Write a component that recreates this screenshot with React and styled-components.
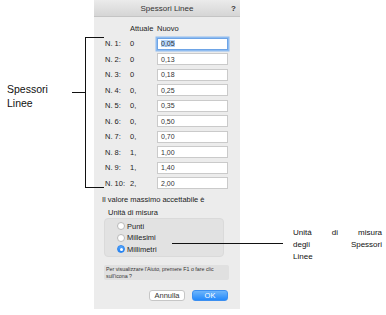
import React from 'react';
import styled, { createGlobalStyle } from 'styled-components';

const Global = createGlobalStyle`
  html, body { margin: 0; padding: 0; background: #fff; }
  body { font-family: "Liberation Sans", Arial, Helvetica, sans-serif; color: #1c1c1c; }
`;

const Page = styled.div`
  position: relative;
  width: 386px;
  height: 315px;
  display: flex;
  overflow: hidden;
`;

const LeftNote = styled.div`
  width: 94px;
  flex: none;
  box-sizing: border-box;
  padding: 82px 0 0 7px;
  font-size: 10.5px;
  line-height: 14px;
  color: #111;
`;

const Bracket = styled.div`
  position: absolute;
  left: 85px;
  top: 37px;
  width: 18px;
  height: 149px;
  border: 1.5px solid #111;
  border-right: none;
`;

const Leader = styled.div`
  position: absolute;
  left: ${p => p.$left}px;
  top: ${p => p.$top}px;
  width: ${p => p.$width}px;
  border-top: 1.5px solid #111;
`;

const Dialog = styled.div`
  width: 146px;
  height: 309px;
  flex: none;
  background: #ececec;
  display: flex;
  flex-direction: column;
  font-size: 7.5px;
`;

const TitleBar = styled.div`
  height: 17px;
  flex: none;
  box-sizing: border-box;
  display: grid;
  grid-template-columns: 1fr auto 1fr;
  align-items: center;
  padding: 0 4px;
  background: linear-gradient(#ebebeb, #d5d5d5);
  border-bottom: 1px solid #c4c4c4;
  font-size: 8px;
  color: #333;
`;

const Title = styled.div`
  grid-column: 2;
  text-align: center;
`;

const Help = styled.div`
  grid-column: 3;
  justify-self: end;
  font-weight: bold;
  font-size: 8px;
`;

const Table = styled.div`
  display: grid;
  grid-template-columns: 25px 27px 71px;
  grid-auto-rows: 12px;
  row-gap: 3.5px;
  align-items: center;
  margin: 5px 0 0 11px;
`;

const HeadCell = styled.div`
  grid-column: ${p => p.$col};
`;

const Cell = styled.div`
  white-space: nowrap;
`;

const Input = styled.div`
  height: 12px;
  box-sizing: border-box;
  background: #fff;
  border: 1px solid ${p => (p.$focused ? '#6ea4e6' : '#cacaca')};
  box-shadow: ${p => (p.$focused ? '0 0 0 1.5px #8fbcf0' : 'none')};
  padding-left: 3px;
  display: flex;
  align-items: center;
  font-size: 7px;
  color: #333;
`;

const Selected = styled.span`
  background: #b4d5fa;
`;

const MaxText = styled.div`
  margin: 6px 0 0 8px;
`;

const GroupLabel = styled.div`
  margin: 4px 0 1px 14px;
`;

const GroupBox = styled.div`
  margin: 0 16px 0 10px;
  height: 39px;
  box-sizing: border-box;
  background: #e2e2e2;
  border: 1px solid #dadada;
  border-radius: 4px;
  display: flex;
  flex-direction: column;
  gap: 3.5px;
  padding: 3px 0 0 12px;
`;

const RadioRow = styled.div`
  display: flex;
  align-items: center;
  gap: 2px;
  height: 8px;
  font-size: 7.5px;
`;

const RadioDot = styled.span`
  width: 8px;
  height: 8px;
  box-sizing: border-box;
  border-radius: 50%;
  flex: none;
  background: ${p => (p.$on ? 'linear-gradient(#5aa8fb, #1b7ff5)' : '#fff')};
  border: 1px solid ${p => (p.$on ? '#2f86ee' : '#b9b9b9')};
  display: flex;
  align-items: center;
  justify-content: center;
  &::after {
    content: '';
    width: 3px;
    height: 3px;
    border-radius: 50%;
    background: ${p => (p.$on ? '#fff' : 'transparent')};
  }
`;

const HelpBox = styled.div`
  margin: 8px 11px 0 10px;
  height: 15px;
  box-sizing: border-box;
  background: #e0e0e0;
  border-radius: 2px;
  padding: 1px 2px;
  font-size: 5.3px;
  line-height: 6.5px;
  color: #333;
`;

const Buttons = styled.div`
  display: flex;
  justify-content: flex-end;
  gap: 7px;
  margin: 10px 12px 0 0;
`;

const Button = styled.div`
  width: 36px;
  height: 11px;
  box-sizing: border-box;
  border-radius: 3px;
  display: flex;
  align-items: center;
  justify-content: center;
  font-size: 7.5px;
  background: ${p => (p.$primary ? 'linear-gradient(#6db5fb, #2489fb)' : '#fff')};
  color: ${p => (p.$primary ? '#fff' : '#333')};
  border: 1px solid ${p => (p.$primary ? '#3c8ff0' : '#c6c6c6')};
`;

const RightNote = styled.div`
  flex: none;
  width: 146px;
  box-sizing: border-box;
  padding: 227px 0 0 53px;
  font-size: 8px;
  line-height: 12px;
  color: #111;
`;

const NoteLine = styled.div`
  width: 89px;
  text-align: ${p => (p.$last ? 'left' : 'justify')};
  text-align-last: ${p => (p.$last ? 'left' : 'justify')};
`;

const rows = [
  ['N. 1:', '0', '0,05'],
  ['N. 2:', '0', '0,13'],
  ['N. 3:', '0', '0,18'],
  ['N. 4:', '0,', '0,25'],
  ['N. 5:', '0,', '0,35'],
  ['N. 6:', '0,', '0,50'],
  ['N. 7:', '0,', '0,70'],
  ['N. 8:', '1,', '1,00'],
  ['N. 9:', '1,', '1,40'],
  ['N. 10:', '2,', '2,00'],
];

export default function App() {
  return (
    <Page>
      <Global />
      <LeftNote>
        Spessori
        <br />
        Linee
      </LeftNote>
      <Dialog>
        <TitleBar>
          <Title>Spessori Linee</Title>
          <Help>?</Help>
        </TitleBar>
        <Table>
          <HeadCell $col={2}>Attuale</HeadCell>
          <HeadCell $col={3}>Nuovo</HeadCell>
          {rows.map(([n, a, v], i) => (
            <React.Fragment key={n}>
              <Cell>{n}</Cell>
              <Cell>{a}</Cell>
              <Input $focused={i === 0}>{i === 0 ? <Selected>{v}</Selected> : v}</Input>
            </React.Fragment>
          ))}
        </Table>
        <MaxText>Il valore massimo accettabile è</MaxText>
        <GroupLabel>Unità di misura</GroupLabel>
        <GroupBox>
          <RadioRow><RadioDot />Punti</RadioRow>
          <RadioRow><RadioDot />Millesimi</RadioRow>
          <RadioRow><RadioDot $on />Millimetri</RadioRow>
        </GroupBox>
        <HelpBox>
          Per visualizzare l'Aiuto, premere F1 o fare clic
          <br />
          sull'icona ?
        </HelpBox>
        <Buttons>
          <Button>Annulla</Button>
          <Button $primary>OK</Button>
        </Buttons>
      </Dialog>
      <RightNote>
        <NoteLine>Unitá di misura</NoteLine>
        <NoteLine>degli Spessori</NoteLine>
        <NoteLine $last>Linee</NoteLine>
      </RightNote>
      <Bracket />
      <Leader $left={72} $top={92} $width={13} />
      <Leader $left={172} $top={243} $width={111} />
    </Page>
  );
}
